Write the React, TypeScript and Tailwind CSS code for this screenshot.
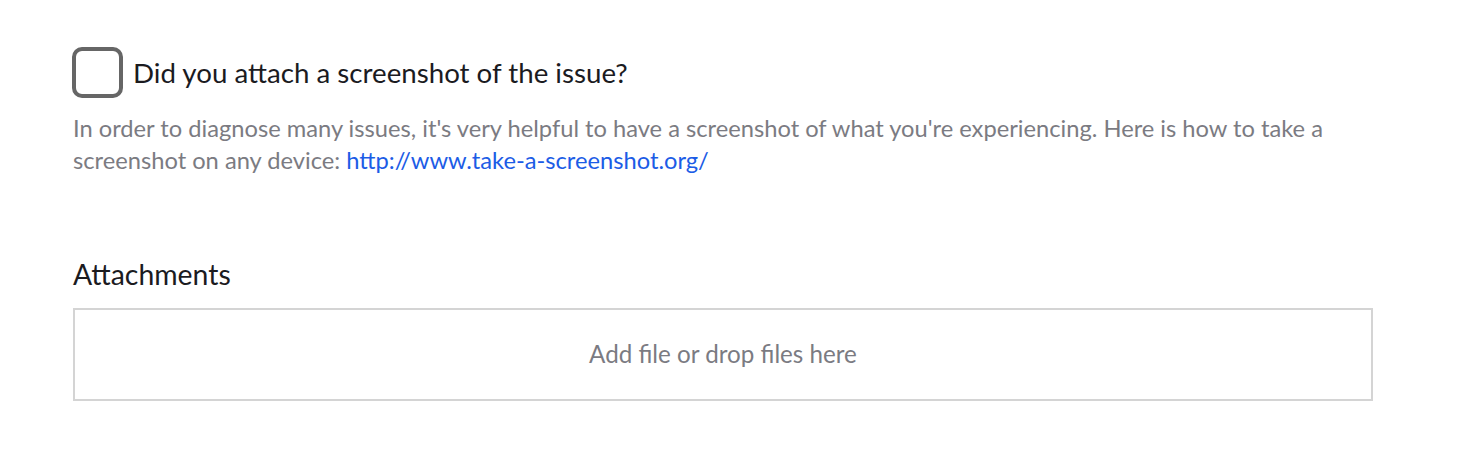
import { useState } from 'react'

export default function App() {
  const [checked, setChecked] = useState(false)

  return (
    <div className="min-h-screen bg-white font-['Lato','Noto_Sans',sans-serif]">
      <div className="w-[1300px] ml-[73px] pt-[47px]">
        {/* Screenshot checkbox */}
        <label className="flex items-center gap-[10px] cursor-pointer">
          <button
            type="button"
            onClick={() => setChecked(!checked)}
            className="w-[51px] h-[51px] -ml-px shrink-0 rounded-[10px] border-4 border-[#666666] bg-white"
          />
          <span className="text-[27.7px] leading-[32px] text-[#1b1b1f]">
            Did you attach a screenshot of the issue?
          </span>
        </label>
        <p className="mt-[14px] text-[23.7px] leading-[32px] text-[#7b7b82]">
          In order to diagnose many issues, it's very helpful to have a screenshot of what you're
          experiencing. Here is how to take a screenshot on any device:{' '}
          <a href="#" className="text-[#1c5ce6]">
            http://www.take-a-screenshot.org/
          </a>
        </p>

        {/* Attachments */}
        <div className="mt-[82px]">
          <div className="text-[28.4px] leading-[32px] text-[#1b1b1f]">Attachments</div>
          <div className="mt-[18px] h-[93px] border-2 border-[#d4d4d4] flex items-center justify-center">
            <span className="text-[24.2px] text-[#7b7b82]">Add file or drop files here</span>
          </div>
        </div>
      </div>
    </div>
  )
}
